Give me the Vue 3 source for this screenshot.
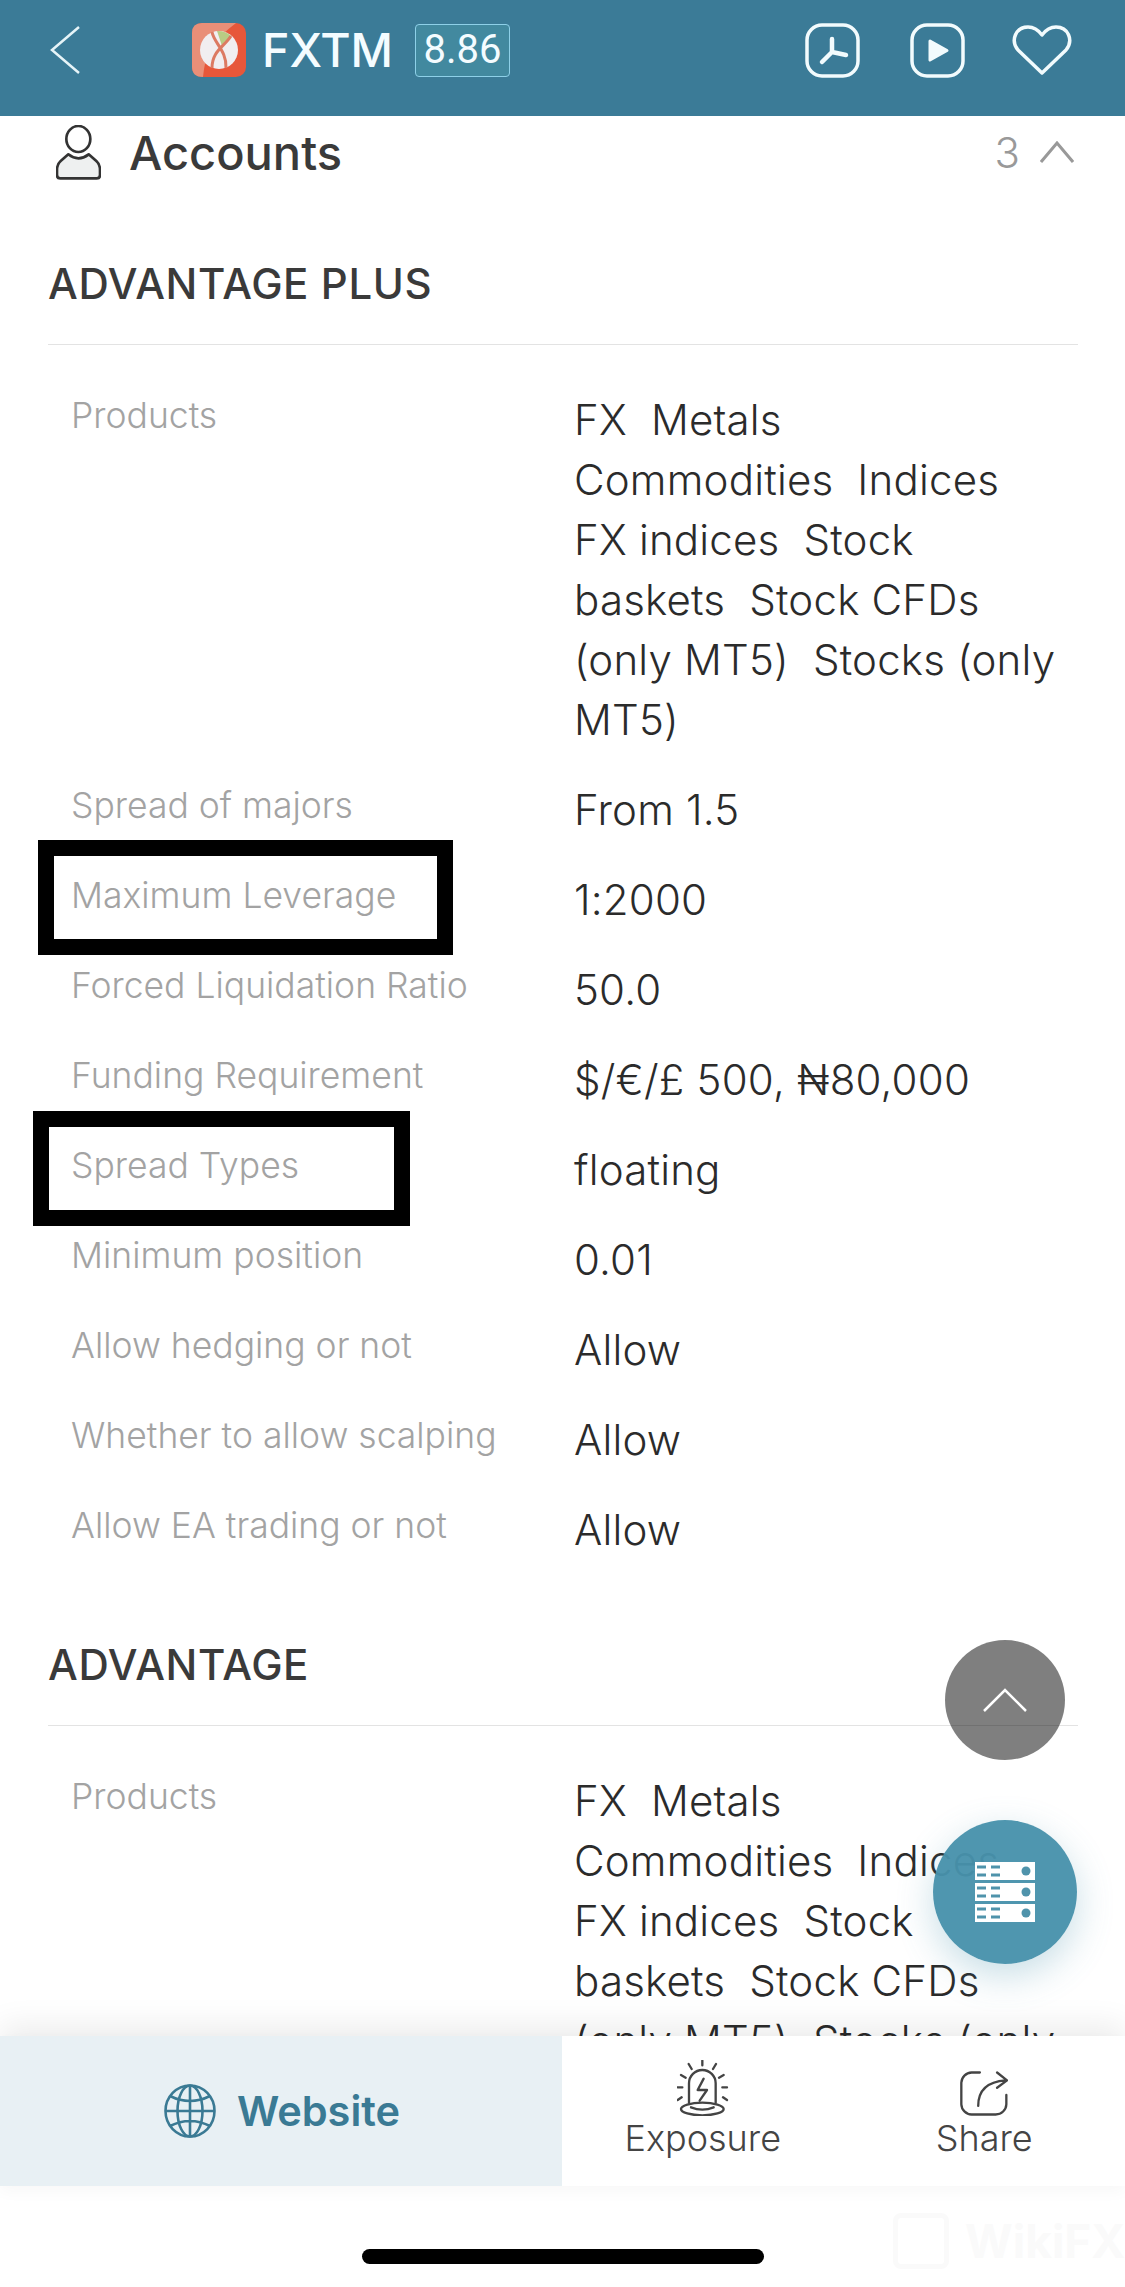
<script setup>
const products = ["FX  Metals", "Commodities  Indices", "FX indices  Stock", "baskets  Stock CFDs", "(only MT5)  Stocks (only", "MT5)"];

const sections = [
  {
    title: "ADVANTAGE PLUS",
    rows: [
      { label: "Products", lines: products },
      { label: "Spread of majors", lines: ["From 1.5"] },
      { label: "Maximum Leverage", lines: ["1:2000"], mark: "mark-leverage" },
      { label: "Forced Liquidation Ratio", lines: ["50.0"] },
      { label: "Funding Requirement", lines: ["$/€/£ 500, ₦80,000"] },
      { label: "Spread Types", lines: ["floating"], mark: "mark-spread" },
      { label: "Minimum position", lines: ["0.01"] },
      { label: "Allow hedging or not", lines: ["Allow"] },
      { label: "Whether to allow scalping", lines: ["Allow"] },
      { label: "Allow EA trading or not", lines: ["Allow"] },
    ],
  },
  {
    title: "ADVANTAGE",
    // the last line is behind the bottom bar in this scroll position
    rows: [{ label: "Products", lines: products.slice(0, 5) }],
  },
];
</script>

<template>
  <div class="page">
    <header class="topbar">
      <svg class="back" width="30" height="48" viewBox="0 0 30 48" fill="none">
        <path d="M29 1 L2 24 L29 47" stroke="#e6f4f8" stroke-width="2.5" />
      </svg>
      <svg class="logo" width="54" height="54" viewBox="0 0 54 54">
        <rect width="54" height="54" rx="10" fill="#e7573a" />
        <path d="M10 0 H44 Q36 6 30 12 Q14 22 11 54 Q0 54 0 44 V10 Q0 0 10 0 Z" fill="#e98f78" />
        <circle cx="27" cy="27" r="19" fill="#f1eef0" />
        <path d="M25 8 A19 19 0 0 1 39 13 L30 23 Z" fill="#b9cb84" />
        <path d="M20 9 C22 20 35 28 34 45 M39 13 C32 24 20 28 20 45" stroke="#dc7a62" stroke-width="3" fill="none" />
      </svg>
      <span class="brand">FXTM</span>
      <span class="score">8.86</span>
      <div class="top-icons">
        <svg width="55" height="55" viewBox="0 0 55 55" fill="none">
          <rect x="2" y="2" width="51" height="51" rx="15" stroke="#f2fbfd" stroke-width="3.5" />
          <path d="M27 16 V29 L17 39 M27 29 L41 32" stroke="#f2fbfd" stroke-width="4.5" stroke-linecap="round" stroke-linejoin="round" />
        </svg>
        <svg width="55" height="55" viewBox="0 0 55 55" fill="none">
          <rect x="2" y="2" width="51" height="51" rx="15" stroke="#f2fbfd" stroke-width="3.5" />
          <path d="M20 18 L37 27.5 L20 37 Z" fill="#f2fbfd" stroke="#f2fbfd" stroke-width="3" stroke-linejoin="round" />
        </svg>
        <svg width="60" height="52" viewBox="0 0 60 52" fill="none">
          <path d="M30 49 L6 26 C-2 16 4 3 16 3 C23 3 27 7 30 11 C33 7 37 3 44 3 C56 3 62 16 54 26 Z" stroke="#f2fbfd" stroke-width="3.5" stroke-linejoin="round" />
        </svg>
      </div>
    </header>

    <main class="content">
      <div class="accounts">
        <svg width="45" height="55" viewBox="0 0 135 165">
          <ellipse cx="67" cy="42" rx="36" ry="39" fill="none" stroke="#333" stroke-width="8" />
          <path d="M37 88 L14 108 Q3 118 3 135 V150 Q3 160 13 160 H122 Q132 160 132 150 V135 Q132 118 121 108 L98 88 Q67 112 37 88 Z" fill="#eef0f0" stroke="#333" stroke-width="8" stroke-linejoin="round" />
        </svg>
        <span class="accounts-title">Accounts</span>
        <span class="accounts-count">3</span>
        <svg width="34" height="22" viewBox="0 0 34 22" fill="none">
          <path d="M1 21 L17 2 L33 21" stroke="#999" stroke-width="3" />
        </svg>
      </div>

      <section v-for="section in sections" :key="section.title" class="section">
        <h2>{{ section.title }}</h2>
        <div class="rows">
          <div v-for="row in section.rows" :key="row.label" class="row">
            <div class="label">{{ row.label }}</div>
            <div class="value">
              <div v-for="line in row.lines" :key="line">{{ line }}</div>
            </div>
            <div v-if="row.mark" class="mark" :class="row.mark"></div>
          </div>
        </div>
      </section>
    </main>

    <button class="to-top">
      <svg width="44" height="24" viewBox="0 0 44 24" fill="none">
        <path d="M1 23 L22 2 L43 23" stroke="#fff" stroke-width="2.5" />
      </svg>
    </button>

    <button class="fab">
      <svg width="60" height="60" viewBox="0 0 60 60">
        <g v-for="y in [0, 21, 42]" :key="y">
          <rect :y="y" width="60" height="18" fill="#fff" />
          <path :transform="`translate(0 ${y})`" d="M2 5 H11 M16 5 H25 M2 13 H11 M16 13 H25" stroke="#4f93ab" stroke-width="3" />
          <circle cx="51" :cy="y + 9" r="4.5" fill="#4f93ab" />
        </g>
      </svg>
    </button>

    <div class="bottom">
      <div class="actions">
        <div class="website">
          <svg width="52" height="54" viewBox="0 0 52 54" fill="none" stroke="#3a7a94" stroke-width="2.6">
            <ellipse cx="26" cy="27" rx="24.5" ry="25.5" />
            <ellipse cx="26" cy="27" rx="12.5" ry="25.5" />
            <path d="M26 1.5 V52.5 M1.5 27 H50.5 M6 12 Q26 22 46 12 M6 42 Q26 32 46 42" />
          </svg>
          <span>Website</span>
        </div>
        <div class="action">
          <svg width="52" height="56" viewBox="0 0 156 168" fill="none" stroke="#444" stroke-width="7" stroke-linecap="round" stroke-linejoin="round">
            <path d="M36 128 V70 A40 40 0 0 1 116 70 V128" />
            <ellipse cx="76" cy="147" rx="64" ry="19" />
            <path d="M42 142 Q76 156 110 142" />
            <path d="M80 56 L62 90 H90 L68 122" />
            <path d="M76 2 V16 M35 12 L44 27 M117 12 L108 27 M12 45 L26 53 M140 45 L126 53 M2 82 H16 M150 82 H136 M2 120 L14 112 M150 120 L138 112" />
          </svg>
          <span>Exposure</span>
        </div>
        <div class="action">
          <svg width="48" height="45" viewBox="0 0 145 135" fill="none" stroke="#444" stroke-width="7" stroke-linecap="round" stroke-linejoin="round">
            <path d="M60 4 H35 A32 32 0 0 0 4 35 V100 A32 32 0 0 0 35 131 H108 A32 32 0 0 0 140 100 V72" />
            <path d="M55 105 C55 60 80 32 138 28 M112 4 L142 28 L112 50" />
          </svg>
          <span>Share</span>
        </div>
      </div>
      <div class="home"></div>
      <div class="watermark">
        <span class="watermark-icon"></span>
        <span>WikiFX</span>
      </div>
    </div>
  </div>
</template>

<style scoped>
.page {
  position: relative;
  width: 1125px;
  height: 2287px;
  overflow: hidden;
  background: #fff;
  font-family: Inter, "Noto Sans", sans-serif;
  color: #333;
}

.topbar {
  height: 116px;
  box-sizing: border-box;
  padding: 0 53px 16px 50px;
  background: #3b7b97;
  display: flex;
  align-items: center;
}

.logo {
  margin-left: 112px;
}

.brand {
  margin-left: 16px;
  font-size: 46.5px;
  font-weight: 500;
  color: #f4fcff;
}

.score {
  margin-left: 22px;
  width: 95px;
  height: 53px;
  box-sizing: border-box;
  border: 1.5px solid #8ed0e8;
  border-radius: 4px;
  background: #42899f;
  color: #f4fcff;
  font-family: Roboto, sans-serif;
  font-size: 40px;
  line-height: 50px;
  text-align: center;
}

.top-icons {
  margin-left: auto;
  display: flex;
  align-items: center;
  gap: 50px;
}

.top-icons svg:nth-child(3) {
  margin-left: -3px;
}

.content {
  height: 1920px;
  overflow: hidden;
}

.accounts {
  height: 72px;
  padding: 0 51px 0 56px;
  display: flex;
  align-items: center;
}

.accounts-title {
  margin-left: 28px;
  font-size: 47px;
  font-weight: 500;
  color: #3a3a3a;
}

.accounts-count {
  margin-left: auto;
  margin-right: 20px;
  font-size: 42px;
  font-weight: 300;
  color: #999;
}

.section {
  margin: 0 47px 0 48px;
  padding-top: 45px;
}

.section:first-of-type {
  padding-top: 66px;
}

h2 {
  margin: 0 0 45px;
  height: 91px;
  box-sizing: border-box;
  border-bottom: 1px solid #e3e3e3;
  font-size: 42px;
  font-weight: 500;
  letter-spacing: 0.6px;
  line-height: 60px;
  color: #3a3a3a;
}

.row {
  position: relative;
  display: grid;
  grid-template-columns: 503px 1fr;
  margin-bottom: 30px;
  padding-left: 23px;
}

.label {
  font-size: 35.5px;
  font-weight: 300;
  line-height: 52px;
  color: #a3a3a3;
}

.value {
  font-size: 42px;
  font-weight: 300;
  letter-spacing: 0.2px;
  line-height: 60px;
  color: #2b2b2b;
  white-space: pre;
}

.mark {
  position: absolute;
  box-sizing: border-box;
  height: 115px;
  border: 16px solid #000;
}

.mark-leverage {
  left: -10px;
  top: -30px;
  width: 415px;
}

.mark-spread {
  left: -15px;
  top: -29px;
  width: 377px;
}

.to-top,
.fab {
  position: absolute;
  border: none;
  padding: 0;
  border-radius: 50%;
  display: flex;
  align-items: center;
  justify-content: center;
}

.to-top {
  left: 945px;
  top: 1640px;
  width: 120px;
  height: 120px;
  background: rgba(0, 0, 0, 0.5);
}

.fab {
  left: 933px;
  top: 1820px;
  width: 144px;
  height: 144px;
  background: rgba(72, 146, 172, 0.96);
  box-shadow: 0 12px 36px rgba(72, 146, 172, 0.3);
}

.bottom {
  position: absolute;
  left: 0;
  right: 0;
  bottom: 0;
  height: 251px;
  background: #fff;
  box-shadow: 0 -10px 30px rgba(0, 0, 0, 0.08);
}

.actions {
  height: 150px;
  display: flex;
  box-shadow: 0 6px 14px rgba(0, 0, 0, 0.03);
}

.website {
  width: 562px;
  padding-left: 2px;
  box-sizing: border-box;
  background: #e8f0f4;
  display: flex;
  align-items: center;
  justify-content: center;
  gap: 21px;
  color: #3a7a94;
  font-size: 41.5px;
  font-weight: 600;
}

.action {
  flex: 1;
  display: flex;
  flex-direction: column;
  align-items: center;
  justify-content: flex-end;
  padding-bottom: 26px;
  font-size: 36px;
  font-weight: 300;
  line-height: 44px;
  color: #444;
}

.home {
  width: 402px;
  height: 15px;
  margin: 63px auto 0;
  border-radius: 8px;
  background: #000;
}

.watermark {
  position: absolute;
  left: 893px;
  top: 177px;
  display: flex;
  align-items: center;
  gap: 16px;
  font-size: 46px;
  font-weight: 700;
  color: #fafafa;
}

.watermark-icon {
  width: 46px;
  height: 46px;
  border: 5px solid #fafafa;
  border-radius: 8px;
}
</style>
